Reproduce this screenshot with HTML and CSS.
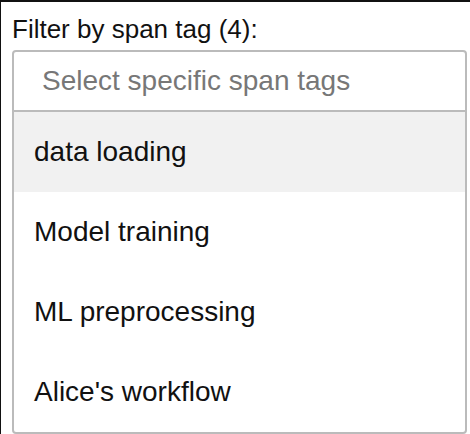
FILE: index.html
```html
<!DOCTYPE html>
<html>
<head>
<meta charset="utf-8">
<link rel="stylesheet" href="styles.css">
</head>
<body>
<div class="frame">
  <label class="label">Filter by span tag (4):</label>
  <div class="select">
    <div class="input">Select specific span tags</div>
    <ul class="menu">
      <li class="option active">data loading</li>
      <li class="option">Model training</li>
      <li class="option">ML preprocessing</li>
      <li class="option">Alice's workflow</li>
    </ul>
  </div>
</div>
</body>
</html>
```
FILE: styles.css
```css
html, body {
  margin: 0;
  padding: 0;
  background: #fff;
}
.frame {
  width: 470px;
  height: 434px;
  box-sizing: border-box;
  border-top: 2px solid #111;
  border-left: 1px solid #111;
  padding: 12px 3px 0 11px;
  font-family: "Liberation Sans", Arial, sans-serif;
  overflow: hidden;
}
.label {
  display: block;
  font-size: 26px;
  line-height: 30px;
  color: #111;
  height: 36px;
}
.select {
  border: 2px solid #bbb;
  border-radius: 4px;
  overflow: hidden;
}
.input {
  height: 58px;
  line-height: 58px;
  padding-left: 28px;
  font-size: 28px;
  color: #777;
  border-bottom: 2px solid #bbb;
}
.menu {
  list-style: none;
  margin: 0;
  padding: 0;
}
.option {
  height: 80px;
  line-height: 80px;
  padding-left: 20px;
  font-size: 28px;
  color: #111;
}
.option.active {
  background: #f1f1f1;
}
```
